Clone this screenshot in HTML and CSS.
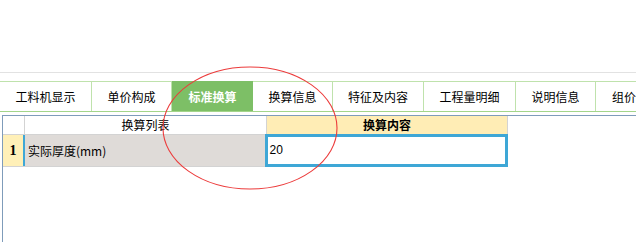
FILE: index.html
```html
<!DOCTYPE html>
<html lang="zh">
<head>
<meta charset="utf-8">
<title>标准换算</title>
<link rel="stylesheet" href="styles.css">
</head>
<body>
<div class="page">
  <div class="topspace"></div>
  <div class="tabs">
    <div class="tab w92">工料机显示</div>
    <div class="tab w80">单价构成</div>
    <div class="tab w81 active">标准换算</div>
    <div class="tab w80">换算信息</div>
    <div class="tab w91">特征及内容</div>
    <div class="tab w92">工程量明细</div>
    <div class="tab w80">说明信息</div>
    <div class="tab last">组价</div>
  </div>
  <div class="grid">
    <div class="row head">
      <div class="cell num"></div>
      <div class="cell name">换算列表</div>
      <div class="cell val">换算内容</div>
    </div>
    <div class="row data">
      <div class="cell num">1</div>
      <div class="cell name">实际厚度(mm)</div>
      <div class="cell val">20</div>
    </div>
  </div>
  <svg class="mark" width="636" height="242" viewBox="0 0 636 242" aria-hidden="true">
    <ellipse cx="250" cy="128" rx="87" ry="61" fill="none" stroke="#ec3b3b" stroke-width="1.1"/>
  </svg>
</div>
</body>
</html>
```
FILE: styles.css
```css
html, body {
  margin: 0;
  padding: 0;
  background: #ffffff;
  overflow: hidden;
}
.page {
  position: relative;
  width: 636px;
  height: 242px;
  display: flex;
  flex-direction: column;
  overflow: hidden;
  font-family: "Noto Sans CJK SC", "Noto Sans", sans-serif;
  font-size: 12px;
  color: #000;
}
.topspace {
  flex: none;
  height: 72px;
  border-bottom: 1px solid #e2e2e2;
}
.tabs {
  flex: none;
  margin-top: 8px;
  height: 29px;
  display: flex;
  border-top: 1px solid #bfe2ac;
  border-bottom: 1px solid #a3d58a;
  white-space: nowrap;
}
.tab {
  flex: none;
  box-sizing: border-box;
  height: 29px;
  line-height: 29px;
  text-align: center;
  border-right: 1px solid #bfe2ac;
}
.w92 { width: 92px; }
.w91 { width: 91px; }
.w81 { width: 81px; }
.w80 { width: 80px; }
.tab.last {
  flex: 1;
  border-right: none;
  padding-left: 16px;
  text-align: left;
}
.tab.active {
  margin-top: -1px;
  height: 30px;
  line-height: 31px;
  background: #7dbf66;
  color: #ffffff;
  font-weight: bold;
  border-right: none;
}
.grid {
  flex: 1;
  margin-top: 3px;
  margin-left: 2px;
  border-top: 1px solid #7f9cba;
  border-left: 1px solid #7f9cba;
}
.row {
  display: flex;
  width: 505px;
  border-bottom: 1px solid #d3d3d3;
}
.head {
  height: 18px;
}
.head .cell {
  box-sizing: border-box;
  height: 18px;
  line-height: 18px;
  text-align: center;
  border-right: 1px solid #d3d3d3;
}
.head .num { width: 22px; }
.head .name { width: 242px; }
.head .val {
  width: 241px;
  background: #ffedb5;
  font-weight: bold;
}
.data {
  height: 31px;
}
.data .cell {
  box-sizing: border-box;
  height: 31px;
  line-height: 31px;
}
.data .num {
  width: 22px;
  background: #fff0b8;
  border-right: 2px solid #3ea7d6;
  text-align: center;
  font-family: "Liberation Serif", serif;
  font-weight: bold;
  font-size: 14px;
}
.data .name {
  width: 241px;
  background: #dfdbd8;
  padding-left: 3px;
}
.data .val {
  width: 243px;
  height: 33px;
  margin-top: -1px;
  margin-bottom: -1px;
  border: 3px solid #3ea7d6;
  background: #ffffff;
  padding-left: 1px;
  line-height: 27px;
  font-family: "Liberation Sans", sans-serif;
}
.mark {
  position: absolute;
  left: 0;
  top: 0;
  pointer-events: none;
}
```
